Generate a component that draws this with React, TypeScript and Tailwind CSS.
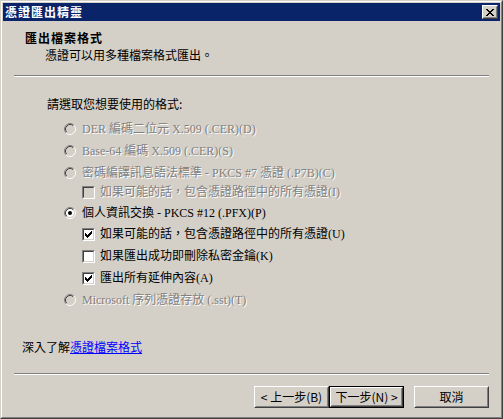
import React from 'react'

const cjk = "font-['Noto_Sans_CJK_TC',sans-serif]"
const mixed = "font-['Liberation_Serif','Noto_Sans_CJK_TC',serif]"

const Radio = ({ checked, disabled }: { checked?: boolean; disabled?: boolean }) => (
  <svg width="12" height="12" viewBox="0 0 12 12" className="shrink-0">
    <circle cx="6" cy="6" r="4.2" fill={disabled ? '#d4d0c8' : '#ffffff'} />
    <path d="M2.11 9.89 A5.5 5.5 0 0 1 9.89 2.11" fill="none" stroke="#808080" strokeWidth="1" />
    <path d="M9.89 2.11 A5.5 5.5 0 0 1 2.11 9.89" fill="none" stroke="#ffffff" strokeWidth="1" />
    <path d="M2.82 9.18 A4.5 4.5 0 0 1 9.18 2.82" fill="none" stroke="#404040" strokeWidth="1" />
    <path d="M9.18 2.82 A4.5 4.5 0 0 1 2.82 9.18" fill="none" stroke="#d4d0c8" strokeWidth="1" />
    {checked && <circle cx="6" cy="6" r="2" fill="#000000" />}
  </svg>
)

const Checkbox = ({ checked, disabled }: { checked?: boolean; disabled?: boolean }) => (
  <div className="w-[13px] h-[13px] shrink-0 border border-t-[#808080] border-l-[#808080] border-r-white border-b-white">
    <div
      className={
        disabled
          ? 'w-full h-full flex items-center justify-center border border-t-[#404040] border-l-[#404040] border-r-[#d4d0c8] border-b-[#d4d0c8] bg-[#d4d0c8]'
          : 'w-full h-full flex items-center justify-center border border-t-[#404040] border-l-[#404040] border-r-[#d4d0c8] border-b-[#d4d0c8] bg-white'
      }
    >
      {checked && (
        <svg width="7" height="7" viewBox="0 0 7 7" shapeRendering="crispEdges">
          <path
            d="M6 0h1v1h-1z M5 1h2v1h-2z M0 2h1v1h-1z M4 2h3v1h-3z M0 3h2v1h-2z M3 3h3v1h-3z M0 4h5v1h-5z M1 5h3v1h-3z M2 6h1v1h-1z"
            fill="#000"
          />
        </svg>
      )}
    </div>
  </div>
)

const RadioRow = ({ label, checked, disabled, mt }: { label: string; checked?: boolean; disabled?: boolean; mt: string }) => (
  <div className={`flex items-center h-[14px] ml-[61px] gap-[6px] ${mt}`}>
    <Radio checked={checked} disabled={disabled} />
    <span
      className={
        disabled
          ? `${mixed} text-[12px] leading-[14px] whitespace-nowrap text-[#808080] [text-shadow:1px_1px_0_#ffffff]`
          : `${mixed} text-[12px] leading-[14px] whitespace-nowrap text-black`
      }
    >
      {label}
    </span>
  </div>
)

const CheckRow = ({ label, checked, disabled, mt }: { label: string; checked?: boolean; disabled?: boolean; mt: string }) => (
  <div className={`flex items-center h-[14px] ml-[79px] gap-[5px] ${mt}`}>
    <Checkbox checked={checked} disabled={disabled} />
    <span
      className={
        disabled
          ? `${mixed} text-[12px] leading-[14px] whitespace-nowrap text-[#808080] [text-shadow:1px_1px_0_#ffffff]`
          : `${mixed} text-[12px] leading-[14px] whitespace-nowrap text-black`
      }
    >
      {label}
    </span>
  </div>
)

const Button = ({ label, isDefault }: { label: string; isDefault?: boolean }) => (
  <div className={isDefault ? 'w-[75px] h-[22px] border border-black' : 'w-[75px] h-[22px]'}>
    <div className="w-full h-full border border-t-white border-l-white border-r-[#404040] border-b-[#404040]">
      <div className="w-full h-full flex items-center justify-center border border-t-[#d4d0c8] border-l-[#d4d0c8] border-r-[#808080] border-b-[#808080]">
        <span className={`${cjk} text-[12px] leading-[14px] text-black whitespace-nowrap`}>{label}</span>
      </div>
    </div>
  </div>
)

const Separator = ({ mt }: { mt: string }) => (
  <div className={`mx-[11px] h-[2px] border-t border-t-[#808080] border-b border-b-white ${mt}`} />
)

export default function App() {
  return (
    <div className="w-[503px] h-[419px] bg-[#d4d0c8] border border-t-[#d4d0c8] border-l-[#d4d0c8] border-r-[#404040] border-b-[#404040]">
      <div className="w-full h-full flex flex-col p-[1px] border border-t-white border-l-white border-r-[#808080] border-b-[#808080]">
        <div className="h-[18px] shrink-0 bg-[#0a246a] flex items-center justify-between pl-[2px] pr-[2px]">
          <span className={`${cjk} text-[12px] leading-[14px] font-bold tracking-[1px] text-white`}>憑證匯出精靈</span>
          <div className="w-[16px] h-[14px] border border-t-white border-l-white border-r-[#404040] border-b-[#404040] bg-[#d4d0c8]">
            <div className="w-full h-full flex items-center justify-center border border-t-[#d4d0c8] border-l-[#d4d0c8] border-r-[#808080] border-b-[#808080]">
              <svg width="8" height="7" viewBox="0 0 8 7" shapeRendering="crispEdges">
                <path
                  d="M0 0h2v1h-2z M6 0h2v1h-2z M1 1h2v1h-2z M5 1h2v1h-2z M2 2h4v1h-4z M3 3h2v1h-2z M2 4h4v1h-4z M1 5h2v1h-2z M5 5h2v1h-2z M0 6h2v1h-2z M6 6h2v1h-2z"
                  fill="#000"
                />
              </svg>
            </div>
          </div>
        </div>

        <div className={`${cjk} mt-[10px] ml-[22px] h-[14px] text-[12px] leading-[14px] font-bold tracking-[1px] text-black`}>
          匯出檔案格式
        </div>
        <div className={`${cjk} mt-[3px] ml-[42px] h-[14px] text-[12px] leading-[14px] text-black`}>
          憑證可以用多種檔案格式匯出。
        </div>

        <Separator mt="mt-[13px]" />

        <div className={`${cjk} mt-[20px] ml-[44px] h-[14px] text-[12px] leading-[14px] text-black`}>
          請選取您想要使用的格式:
        </div>

        <RadioRow mt="mt-[11px]" disabled label="DER 編碼二位元 X.509 (.CER)(D)" />
        <RadioRow mt="mt-[8px]" disabled label="Base-64 編碼 X.509 (.CER)(S)" />
        <RadioRow mt="mt-[8px]" disabled label="密碼編譯訊息語法標準 - PKCS #7 憑證 (.P7B)(C)" />
        <CheckRow mt="mt-[5px]" disabled label="如果可能的話，包含憑證路徑中的所有憑證(I)" />
        <RadioRow mt="mt-[7px]" checked label="個人資訊交換 - PKCS #12 (.PFX)(P)" />
        <CheckRow mt="mt-[7px]" checked label="如果可能的話，包含憑證路徑中的所有憑證(U)" />
        <CheckRow mt="mt-[8px]" label="如果匯出成功即刪除私密金鑰(K)" />
        <CheckRow mt="mt-[8px]" checked label="匯出所有延伸內容(A)" />
        <RadioRow mt="mt-[8px]" disabled label="Microsoft 序列憑證存放 (.sst)(T)" />

        <div className={`${cjk} mt-[33px] ml-[19px] h-[14px] text-[12px] leading-[14px] text-black`}>
          深入了解<span className="text-[#0000ff] underline">憑證檔案格式</span>
        </div>

        <Separator mt="mt-[19px]" />

        <div className="mt-[11px] flex justify-end pr-[11px]">
          <Button label="< 上一步(B)" />
          <Button label="下一步(N) >" isDefault />
          <div className="w-[10px]" />
          <Button label="取消" />
        </div>
      </div>
    </div>
  )
}
